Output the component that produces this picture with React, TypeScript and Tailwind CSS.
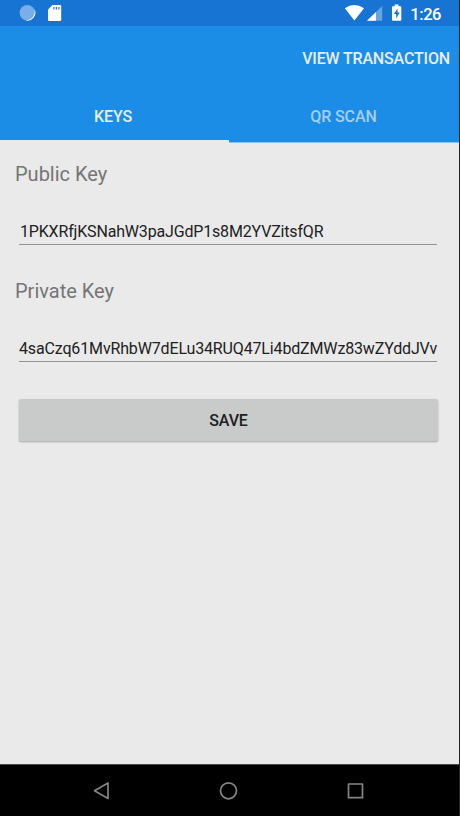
import React from 'react';

function StatusBar() {
  return (
    <div className="flex h-[26px] items-center justify-between bg-[#1874d2] pl-[19px] pr-[18px] text-white">
      <svg width="44" height="26" viewBox="0 0 44 26">
        <circle cx="8.3" cy="12.8" r="7.7" fill="#78afe8" />
        <path d="M15.4 8.8A8 8 0 0 1 6.3 20.4A9 9 0 0 0 15.4 8.8Z" fill="#fff" />
        <path d="M33.5 5H41Q42.2 5 42.2 6.2V19.8Q42.2 21 41 21H30.2Q29 21 29 19.8V9.5Z" fill="#fff" />
        <path d="M34.9 7v2.6M37.4 7v2.6M39.9 7v2.6" stroke="#1874d2" strokeWidth="1.2" />
      </svg>
      <div className="flex items-center">
        <svg width="60" height="26" viewBox="0 0 60 26">
          <path d="M0.8 8.2Q10.4 1.8 20 8.2L10.4 20.6Z" fill="#fff" />
          <path d="M38.2 6V20.8H23Z" fill="#66a4e2" />
          <path d="M32 12.1V20.8H23Z" fill="#fff" />
          <path d="M50.7 4.5H54.5V6.2H56.5Q57.3 6.2 57.3 7V19.8Q57.3 20.7 56.5 20.7H48.9Q48 20.7 48 19.8V7Q48 6.2 48.9 6.2H50.7Z" fill="#fff" />
          <path d="M53.5 8.5L49.9 14H52.2V18.5L55.7 12.6H53.5Z" fill="#1874d2" />
        </svg>
        <span className="ml-[6px] mt-[4px] text-[16.5px] leading-[20px] font-medium tracking-[-0.45px]">1:26</span>
      </div>
    </div>
  );
}

function Field({ label, value, spacing }: { label: string; value: string; spacing: string }) {
  return (
    <div className="h-[117px] pt-[18px]">
      <div className="ml-[15px] h-[26px] text-[20px] leading-[26px] text-[#757575]">{label}</div>
      <div className="mt-[32px] mr-[22px] ml-[19px] flex h-[26px] items-start border-b border-[#949494] whitespace-nowrap text-[16px] leading-[26px] text-[#212121]">
        <span className={spacing}>{value}</span>
      </div>
    </div>
  );
}

export default function App() {
  return (
    <div className="flex h-[816px] w-[460px] flex-col overflow-hidden border-r border-[#202426] bg-[#eaeaea] font-['Roboto',sans-serif]">
      <StatusBar />
      <header className="h-[117px] bg-[#1c8de6] text-[16px] font-medium text-[#e6edf5]">
        <div className="flex h-[64px] items-center justify-end pt-px pr-[9px]">
          <span className="tracking-[-0.16px]">VIEW TRANSACTION</span>
        </div>
        <div className="flex h-[53px]">
          <div className="flex w-[229px] justify-center border-b-[3px] border-[#eaeaea] pt-[15px] pr-[3px] leading-[24px]">
            <span className="tracking-[-0.1px]">KEYS</span>
          </div>
          <div className="flex w-[230px] justify-center border-b border-[#8fc3ef] pt-[15px] pr-px leading-[24px] text-[#a5cdf0]">
            <span className="tracking-[-0.1px]">QR SCAN</span>
          </div>
        </div>
      </header>
      <main className="flex-1">
        <Field label="Public Key" value="1PKXRfjKSNahW3paJGdP1s8M2YVZitsfQR" spacing="ml-px tracking-[-0.17px]" />
        <Field label="Private Key" value="4saCzq61MvRhbW7dELu34RUQ47Li4bdZMWz83wZYddJVv" spacing="tracking-[-0.15px]" />
        <button className="mt-[22px] ml-[19px] flex h-[42px] w-[419px] items-center justify-center rounded-[2px] bg-[#c9cbca] pt-px text-[16px] font-medium tracking-[-0.15px] text-[#202020] shadow-[0_1px_2px_rgba(0,0,0,0.3)]">
          SAVE
        </button>
      </main>
      <nav className="h-[52px] border-t border-[#484848] bg-black">
        <svg width="459" height="51" viewBox="0 0 459 51" fill="none" stroke="#858585" strokeWidth="1.7" strokeLinejoin="round">
          <path d="M108 18V33.5L94.5 25.8Z" />
          <circle cx="228.5" cy="25.8" r="8" />
          <rect x="348.5" y="19" width="14" height="13.7" />
        </svg>
      </nav>
    </div>
  );
}
